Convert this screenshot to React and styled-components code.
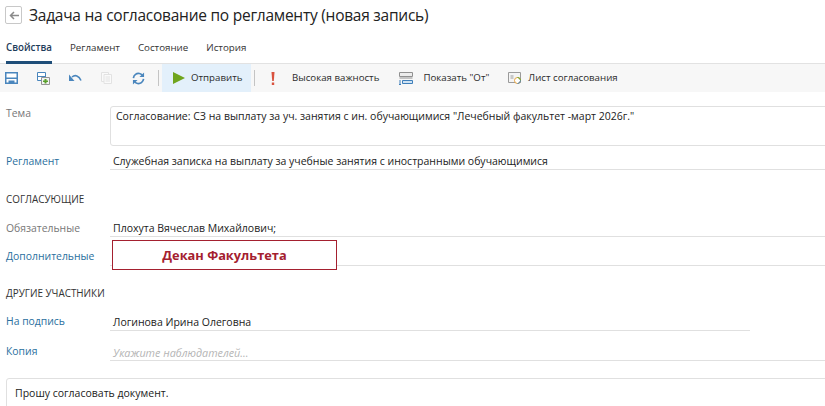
import React from "react";
import styled, { createGlobalStyle } from "styled-components";

const Global = createGlobalStyle`
  html, body { margin: 0; padding: 0; background: #fff; overflow: hidden; }
  body { font-family: "Open Sans", "Noto Sans", sans-serif; }
`;
const Page = styled.div`width: 825px; height: 406px; overflow: hidden; display: flex; flex-direction: column; & > * { flex: none; }`;
const TitleRow = styled.div`height: 31px; display: flex; align-items: flex-start; padding: 6px 0 0 5px; box-sizing: border-box; gap: 7px;`;
const BackButton = styled.button`width: 17px; height: 18px; padding: 0; background: #fff; border: 1px solid #c8c8c8; border-radius: 2px; display: flex; align-items: center; justify-content: center;`;
const Title = styled.h1`margin: -1px 0 0; font-size: 15.5px; letter-spacing: -0.25px; line-height: 20px; font-weight: 400; color: #222; white-space: nowrap;`;
const Tabs = styled.div`height: 33px; display: flex; padding-left: 6px; gap: 18px; box-sizing: border-box; border-bottom: 1px solid #e2e2e2;`;
const Tab = styled.div`
  height: 33px; box-sizing: border-box; padding-top: 10px; font-size: 9.75px; line-height: 14px; white-space: nowrap;
  color: ${p => (p.$active ? "#1e3c5a" : "#333")};
  border-bottom: ${p => (p.$active ? "3px solid #1f4e79" : "none")};
  font-weight: ${p => (p.$active ? 600 : 400)};
`;
const Toolbar = styled.div`height: 28px; background: #f7f7f7; display: flex; align-items: stretch; padding-left: 5px; box-sizing: border-box;`;
const IconSlot = styled.div`width: ${p => p.$w || 32}px; display: flex; align-items: center; flex: none;`;
const Divider = styled.div`width: 1px; height: 16px; background: #c4c4c4; align-self: center; flex: none; margin: ${p => p.$m || "0"};`;
const SendButton = styled.div`width: 89px; background: #e3f0fb; display: flex; align-items: center; padding-left: 11px; gap: 6px; box-sizing: border-box; flex: none; margin-left: 3px;`;
const ToolText = styled.span`font-size: 9.7px; line-height: 14px; color: #2b2b2b; white-space: nowrap;`;
const ToolItem = styled.div`display: flex; align-items: center; flex: none; gap: ${p => p.$gap || 6}px; margin-left: ${p => p.$ml || 0}px;`;
const Form = styled.div`display: flex; flex-direction: column; padding-top: 14px;`;
const Row = styled.div`display: grid; grid-template-columns: 110px 1fr; height: ${p => p.$h}px; margin-top: ${p => p.$mt || 0}px;`;
const Label = styled.div`
  padding: ${p => p.$pt ?? 0}px 0 0 6px; font-size: 10.4px; line-height: 14px; white-space: nowrap;
  color: ${p => (p.$link ? "#2a6f9e" : "#777")};
`;
const Area = styled.div`
  height: 40px; box-sizing: border-box; margin-right: -6px; border: 1px solid #e0e0e0; border-radius: 3px 0 0 3px;
  padding: 2px 0 0 5px; font-size: 10.5px; line-height: 15px; color: #222; white-space: nowrap;
`;
const Field = styled.div`
  position: relative; box-sizing: border-box; height: ${p => p.$h}px; border-bottom: 1px solid #e0e0e0;
  width: ${p => p.$w || "auto"}; padding: ${p => p.$pt ?? 0}px 0 0 ${p => p.$pl ?? 2}px;
  font-size: 10.5px; line-height: 15px; color: #222; white-space: nowrap;
`;
const Placeholder = styled.span`font-style: italic; color: #b5b5b5; font-size: 10.8px;`;
const Section = styled.div`padding-left: 6px; font-size: 9.9px; line-height: 14px; color: #333; white-space: nowrap; margin-top: ${p => p.$mt}px;`;
const Redaction = styled.div`
  position: absolute; left: 2px; top: 3px; width: 225px; height: 30px; box-sizing: border-box;
  border: 1px solid #a4202f; background: #fff; color: #a4202f; font-weight: 700; font-size: 12.8px;
  display: flex; align-items: center; justify-content: center;
`;
const Comment = styled.div`
  margin: 17px -6px 0 6px; height: 40px; box-sizing: border-box; border: 1px solid #e0e0e0; border-radius: 3px 0 0 0;
  padding: 7px 0 0 8px; font-size: 10.5px; line-height: 15px; color: #222;
`;

const Save = () => (
  <svg width="13" height="12" viewBox="0 0 13 12"><path d="M.75.75h11.500v10.500H.75z" fill="#fff" stroke="#4a86bd" strokeWidth="1.500"/><path d="M1 5.500h11V7H1z" fill="#4a86bd"/><path d="M3.500 8.500h6V11h-6z" fill="#4a86bd"/></svg>
);
const SaveAdd = () => (
  <svg width="13" height="13" viewBox="0 0 13 13"><path d="M.5.5h8v8h-8z" fill="#fff" stroke="#4a86bd"/><path d="M1 4h7v1H1z" fill="#4a86bd"/><path d="M4.500 5.500h8v7h-8z" fill="#f2f2f2" stroke="#949494"/><path d="M7.500 7h2v1.500H11v1.500H9.500v1.500h-2V10H6V8.500h1.500z" fill="#5aa02c"/></svg>
);
const Undo = () => (
  <svg width="13" height="8" viewBox="0 0 13 8"><path d="M3 3c3-2.500 7-1.500 9 3.500" fill="none" stroke="#4a86bd" strokeWidth="1.600"/><path d="M0 .5V7h5.500z" fill="#4a86bd"/></svg>
);
const Copy = () => (
  <svg width="11" height="12" viewBox="0 0 11 12"><path d="M.5.5h7v9h-7z" fill="#fafafa" stroke="#e2e2e2"/><path d="M3 2.500h7.500v9H3z" fill="#fafafa" stroke="#e2e2e2"/><path d="M4.500 5h4.500M4.500 7h4.500M4.500 9h4.500" stroke="#e2e2e2"/></svg>
);
const Refresh = () => (
  <svg width="13" height="13" viewBox="0 0 14 14" fill="none"><path d="M1.500 6.500C2 3 5 1 8 1.600c1.400.3 2.400 1 3 2" stroke="#4a86bd" strokeWidth="1.800"/><path d="M13 .5v5H8z" fill="#4a86bd"/><path d="M12.500 7.500c-.5 3.500-3.500 5.500-6.500 4.900-1.400-.3-2.400-1-3-2" stroke="#4a86bd" strokeWidth="1.800"/><path d="M1 13.500v-5h5z" fill="#4a86bd"/></svg>
);
const Play = () => (
  <svg width="12" height="12" viewBox="0 0 12 12"><path d="M0 0l12 6-12 6z" fill="#6fa51e"/></svg>
);
const Bang = () => (
  <svg width="4" height="13" viewBox="0 0 4 13"><path d="M.5 0h3L2.800 9H1.200z" fill="#d9523f"/><path d="M.8 10.500h2.400V13H.8z" fill="#d9523f"/></svg>
);
const ShowFrom = () => (
  <svg width="14" height="13" viewBox="0 0 14 13"><path d="M.5.5h13v4H.5z" fill="#ececec" stroke="#909090"/><path d="M.5 6h13" stroke="#909090"/><path d="M3.500 8.500h10v3h-10z" fill="#cfe3f3" stroke="#3f7fba"/><path d="M1 8v4.500M0 12.500h2" stroke="#3f7fba"/></svg>
);
const Sheet = () => (
  <svg width="14" height="14" viewBox="0 0 14 14" fill="none"><path d="M.5 1.500h12v10H.5z" fill="#f4f4f4" stroke="#9a9a9a"/><path d="M2.500 4h3v4h-3z" fill="#c8c8c8"/><circle cx="9.500" cy="9.500" r="3" fill="#fff" stroke="#e8a33c"/><path d="M9.500 6.500a3 3 0 0 1 3 3" stroke="#5aa02c"/><path d="M12.500 9.500a3 3 0 0 1-3 3" stroke="#3f7fba"/></svg>
);
const Arrow = () => (
  <svg width="10" height="9" viewBox="0 0 10 9" fill="none"><path d="M10 4.500H1.500M5 1 1.500 4.500 5 8" stroke="#8a8a8a" strokeWidth="1.500"/></svg>
);

export default function App() {
  return (
    <Page>
      <Global />
      <TitleRow>
        <BackButton aria-label="Назад"><Arrow /></BackButton>
        <Title>Задача на согласование по регламенту (новая запись)</Title>
      </TitleRow>
      <Tabs>
        <Tab $active>Свойства</Tab>
        <Tab>Регламент</Tab>
        <Tab>Состояние</Tab>
        <Tab>История</Tab>
      </Tabs>
      <Toolbar>
        <IconSlot $w={32}><Save /></IconSlot>
        <IconSlot $w={32}><SaveAdd /></IconSlot>
        <IconSlot $w={32}><Undo /></IconSlot>
        <IconSlot $w={31}><Copy /></IconSlot>
        <IconSlot $w={24}><Refresh /></IconSlot>
        <Divider $m="0 0 0 2px" />
        <SendButton><Play /><ToolText>Отправить</ToolText></SendButton>
        <Divider $m="0 0 0 3px" />
        <ToolItem $ml={16} $gap={17}><Bang /><ToolText>Высокая важность</ToolText></ToolItem>
        <ToolItem $ml={20} $gap={10}><ShowFrom /><ToolText>Показать "От"</ToolText></ToolItem>
        <ToolItem $ml={19} $gap={6}><Sheet /><ToolText>Лист согласования</ToolText></ToolItem>
      </Toolbar>
      <Form>
        <Row $h={40}>
          <Label $pt={0}>Тема</Label>
          <Area>Согласование: СЗ на выплату за уч. занятия с ин. обучающимися "Лечебный факультет -март 2026г."</Area>
        </Row>
        <Row $h={24}>
          <Label $pt={8} $link>Регламент</Label>
          <Field $h={24} $pt={8} $pl={3}>Служебная записка на выплату за учебные занятия с иностранными обучающимися</Field>
        </Row>
        <Section $mt={22}>СОГЛАСУЮЩИЕ</Section>
        <Row $h={24} $mt={7}>
          <Label $pt={8}>Обязательные</Label>
          <Field $h={24} $pt={8} $pl={3}>Плохута Вячеслав Михайлович;</Field>
        </Row>
        <Row $h={29}>
          <Label $pt={12} $link>Дополнительные</Label>
          <Field $h={29}><Redaction>Декан Факультета</Redaction></Field>
        </Row>
        <Section $mt={20}>ДРУГИЕ УЧАСТНИКИ</Section>
        <Row $h={31}>
          <Label $pt={14} $link>На подпись</Label>
          <Field $h={31} $w="640px" $pt={15} $pl={3}>Логинова Ирина Олеговна</Field>
        </Row>
        <Row $h={30}>
          <Label $pt={13} $link>Копия</Label>
          <Field $h={30} $pt={14} $pl={3}><Placeholder>Укажите наблюдателей...</Placeholder></Field>
        </Row>
        <Comment>Прошу согласовать документ.</Comment>
      </Form>
    </Page>
  );
}
